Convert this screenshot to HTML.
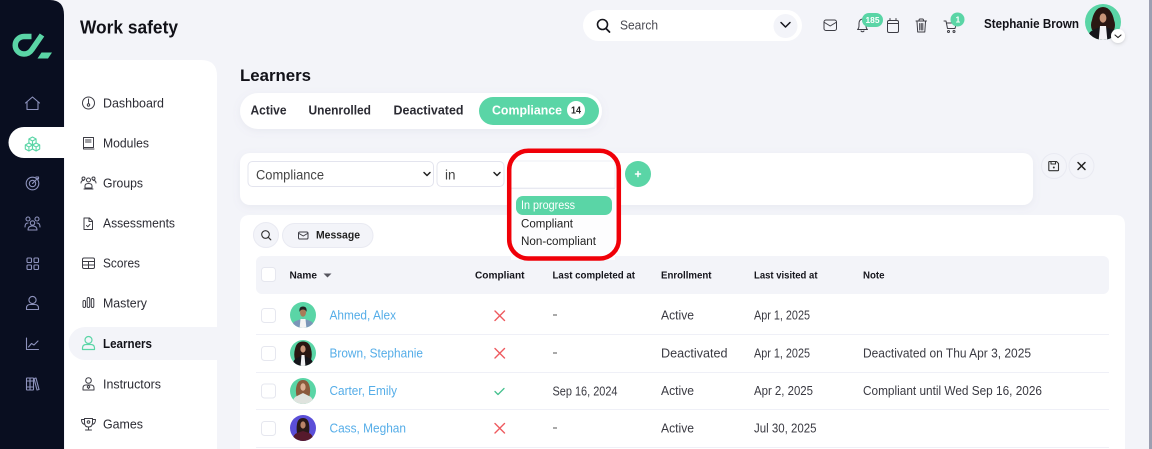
<!DOCTYPE html>
<html><head><meta charset="utf-8"><style>
html,body{margin:0;padding:0;width:1152px;height:449px;overflow:hidden;background:#f3f4f9}
svg{display:block}
text{font-family:"Liberation Sans",sans-serif;fill:#2b2b33}
.b{font-weight:700;fill:#111118}
.nav{font-size:13px}
.th{font-size:10px;font-weight:700;fill:#15151c}
.td{font-size:13px;fill:#3a3a42}
.ln{font-size:13px;fill:#55ade8}
.ic{fill:none;stroke:#3c3c44;stroke-width:1;stroke-linecap:round;stroke-linejoin:round}
.si{fill:none;stroke:#8e93bd;stroke-width:1.1;stroke-linecap:round;stroke-linejoin:round}
.g{fill:none;stroke:#5ad5a6;stroke-width:1.1;stroke-linecap:round;stroke-linejoin:round}
.cb{fill:#fff;stroke:#e6e7ef;stroke-width:1}
.sep{stroke:#eff0f7;stroke-width:1}
.xm{fill:none;stroke:#ee5a5f;stroke-width:1.4;stroke-linecap:round}
</style></head><body>
<svg width="1152" height="449" viewBox="0 0 1152 449" xmlns="http://www.w3.org/2000/svg">
<defs>
<filter id="s" x="-5%" y="-20%" width="110%" height="150%"><feDropShadow dx="0" dy="2" stdDeviation="4" flood-color="#8088a8" flood-opacity=".1"/></filter>
<filter id="s2" x="-50%" y="-50%" width="200%" height="200%"><feDropShadow dx="0" dy="1" stdDeviation="1.500" flood-color="#555" flood-opacity=".25"/></filter>
<clipPath id="c1"><circle cx="303" cy="315" r="13"/></clipPath>
<clipPath id="c2"><circle cx="303" cy="353" r="13"/></clipPath>
<clipPath id="c3"><circle cx="303" cy="391" r="13"/></clipPath>
<clipPath id="c4"><circle cx="303" cy="428" r="13"/></clipPath>
<clipPath id="c5"><circle cx="1103" cy="22" r="18"/></clipPath>
</defs>
<rect width="1152" height="449" fill="#f3f4f9"/>
<rect x="1149" y="0" width="3" height="449" fill="#9c9fb1"/>

<!-- sidebar -->
<path d="M0 0H50Q64 0 64 15V449H0Z" fill="#090e20"/>
<path d="M31.500 36.500H24A8.600 8.600 0 0 0 24 54Q29 54 32 49.500L42 35" fill="none" stroke="#5ad5a6" stroke-width="5.500"/>
<path d="M41.500 52.500H52L48 58.500H37.500Z" fill="#5ad5a6"/>
<path d="M25.500 103L32.500 97L39.500 103M27 102V109.500H38V102" class="si"/>
<path d="M24 127H65V158H24A15.500 15.500 0 0 1 24 127Z" fill="#fff"/>
<g class="g"><path d="M32.500 137l3.600 2v4l-3.600 2-3.600-2v-4zM28.900 139l3.600 2 3.600-2M32.500 141v4"/><path d="M28.900 143l3.600 2v4l-3.600 2-3.600-2v-4zM25.300 145l3.600 2 3.600-2M28.900 147v4"/><path d="M36.100 143l3.600 2v4l-3.600 2-3.600-2v-4zM32.500 145l3.600 2 3.600-2M36.100 147v4"/></g>
<g class="si"><circle cx="32.500" cy="183.500" r="6.300"/><circle cx="32.500" cy="183.500" r="3.200"/><path d="M32.500 183.500l5-5M36 177l2.500 0 0 2"/></g>
<g class="si"><circle cx="28" cy="219" r="2"/><circle cx="37" cy="219" r="2"/><circle cx="32.500" cy="223" r="2.200"/><path d="M25 227q0-4 3-4M40 227q0-4-3-4M28 230q0-4 4.500-4t4.500 4z"/></g>
<g class="si"><rect x="27" y="258" width="4.500" height="4.500" rx="1"/><rect x="34" y="258" width="4.500" height="4.500" rx="1"/><rect x="27" y="265" width="4.500" height="4.500" rx="1"/><rect x="34" y="265" width="4.500" height="4.500" rx="1"/></g>
<g class="si"><circle cx="32.500" cy="300" r="3.600"/><path d="M26.500 309.500v-1.500q0-3.500 4-3.500h4q4 0 4 3.500v1.500z"/></g>
<path d="M26.500 338v11.500H38.500M28.500 347l3-3.500 2.500 1.500 4-4" class="si"/>
<g class="si"><rect x="26.500" y="378" width="3.500" height="12" rx=".5"/><rect x="30" y="378" width="3.500" height="12" rx=".5"/><path d="M26.500 381h7M26.500 387h7M34 378.500l2-.5 3 11.500-2 .5z"/></g>

<!-- sub nav -->
<path d="M65 60H201Q217 60 217 76V449H65Z" fill="#fff"/>
<path d="M85 327H217V360H85A16.500 16.500 0 0 1 85 327Z" fill="#f3f4f9"/>
<text x="80" y="33.500" class="b" font-size="18" textLength="98" lengthAdjust="spacingAndGlyphs">Work safety</text>

<g class="ic"><circle cx="88.500" cy="103" r="6"/><path d="M88.500 99v4.500"/><circle cx="88.500" cy="105" r="1.200"/></g>
<g class="ic"><path d="M83.500 137.500h10v10h-10zM83.500 147.500v1.500h10.500M85.500 140h5.500M85.500 142h5.500"/></g>
<g class="ic"><circle cx="88.500" cy="180" r="2"/><circle cx="83.500" cy="178.500" r="1.500"/><circle cx="93.500" cy="178.500" r="1.500"/><path d="M85 188v-2q0-2.500 3.500-2.500t3.500 2.500v2zM81 183q0-2.500 2.500-2.500M96 183q0-2.500-2.500-2.500M84 189h9"/></g>
<g class="ic"><path d="M84 218h5.500l3 3v8.500H84zM89 218v3.500h3.500M86.500 225.500l1.300 1.300 2.200-2.500"/></g>
<g class="ic"><rect x="82.500" y="258" width="12" height="10.500" rx="1.500"/><path d="M82.500 261.500h12M82.500 265h12M88.500 261.500v7"/></g>
<g class="ic"><rect x="83" y="300.500" width="2.500" height="7" rx="1.200"/><rect x="87.200" y="297.500" width="2.500" height="10" rx="1.200"/><rect x="91.300" y="298.500" width="2.500" height="9" rx="1.200"/></g>
<g class="g" style="stroke-width:1.200"><circle cx="88.500" cy="340" r="3.500"/><path d="M82.500 349.500v-1.500q0-3.500 4-3.500h4q4 0 4 3.500v1.500z"/></g>
<g class="ic"><circle cx="88.500" cy="380.500" r="2.800"/><path d="M83 390v-2q0-3 3-3h5q3 0 3 3v2zM88.500 385l-1.300 2 1.300 1.500 1.300-1.500z"/></g>
<g class="ic"><path d="M84.500 418.500h8v4q0 4.500-4 4.500t-4-4.500zM84.500 419.500h-3q0 4.500 3.500 5M92.500 419.500h3q0 4.500-3.500 5M88.500 427v2.500M85.500 430h6"/><circle cx="88.500" cy="422" r="1.300"/></g>

<text x="103" y="107.500" class="nav" textLength="61" lengthAdjust="spacingAndGlyphs">Dashboard</text>
<text x="103" y="147.500" class="nav" textLength="46" lengthAdjust="spacingAndGlyphs">Modules</text>
<text x="103" y="187.500" class="nav" textLength="40" lengthAdjust="spacingAndGlyphs">Groups</text>
<text x="103" y="227.500" class="nav" textLength="72" lengthAdjust="spacingAndGlyphs">Assessments</text>
<text x="103" y="267.500" class="nav" textLength="37" lengthAdjust="spacingAndGlyphs">Scores</text>
<text x="103" y="307.500" class="nav" textLength="44" lengthAdjust="spacingAndGlyphs">Mastery</text>
<text x="103" y="348" class="nav b" textLength="49" lengthAdjust="spacingAndGlyphs">Learners</text>
<text x="103" y="388.500" class="nav" textLength="58" lengthAdjust="spacingAndGlyphs">Instructors</text>
<text x="103" y="428.500" class="nav" textLength="40" lengthAdjust="spacingAndGlyphs">Games</text>

<!-- top bar -->
<rect x="583" y="10" width="219" height="31" rx="15.500" fill="#fff"/>
<circle cx="602.500" cy="24.500" r="5" fill="none" stroke="#15151c" stroke-width="1.600"/>
<path d="M606 28.500l3.500 3.500" stroke="#15151c" stroke-width="1.800" stroke-linecap="round"/>
<text x="620" y="29.500" font-size="12.500" textLength="38" lengthAdjust="spacingAndGlyphs" style="fill:#4a4a52">Search</text>
<circle cx="785.500" cy="26" r="12" fill="#f3f4f9"/>
<path d="M781 22.500l4.500 4.500 4.500-4.500" fill="none" stroke="#15151c" stroke-width="1.500" stroke-linecap="round" stroke-linejoin="round"/>

<g class="ic"><rect x="824" y="20" width="12.500" height="10.500" rx="2"/><path d="M824.500 22.500l5.700 3.500 5.700-3.500"/></g>
<g class="ic"><path d="M857.500 29.500q1.500-1 1.500-4v-2q0-4 3.500-4.500t3.500 4.500v2q0 3 1.500 4zM861 31q1.500 1.500 3 0"/></g>
<rect x="862" y="13" width="21" height="14" rx="7" fill="#5ad5a6"/>
<text x="865.500" y="23" font-size="8.500" font-weight="700" textLength="14" lengthAdjust="spacingAndGlyphs" style="fill:#fff">185</text>
<g class="ic"><rect x="887.500" y="20.500" width="11" height="12" rx="1.500"/><path d="M887.500 23.500h11M890 18.500v2M896 18.500v2"/></g>
<g class="ic"><path d="M916 21h10.500M919 20.500q0-1.500 1-1.500h2.500q1 0 1 1.500M917 21.500l.7 10.500h7.100l.7-10.500M919.700 23.500v6.500M921.250 23.500v6.500M922.800 23.500v6.500"/></g>
<g class="ic"><path d="M944 21h2l1.500 7.500h7.500l1.500-5.500h-10"/><circle cx="948.500" cy="31.500" r="1"/><circle cx="954" cy="31.500" r="1"/></g>
<circle cx="957.500" cy="19.500" r="7" fill="#5ad5a6"/>
<text x="955.500" y="22.500" font-size="8.500" font-weight="700" style="fill:#fff">1</text>
<text x="984" y="28" class="b" font-size="12.500" textLength="95" lengthAdjust="spacingAndGlyphs">Stephanie Brown</text>

<!-- main avatar -->
<circle cx="1103" cy="22" r="18" fill="#5ad5a6"/>
<g clip-path="url(#c5)">
<path d="M1092 30q-2-5 0-10 1-5 3-8 3-5 8-5t8 5q2 3 3 8 2 5 0 10z" fill="#2a1712"/>
<ellipse cx="1103" cy="18" rx="3.400" ry="4.600" fill="#c99578"/>
<path d="M1086 42q1-10 9-13l8-3 8 3q8 3 9 13z" fill="#15151a"/>
<path d="M1100 26h6l1.500 16h-9z" fill="#f3f3f5"/>
</g>
<circle cx="1118" cy="36" r="7" fill="#fff" filter="url(#s2)"/>
<path d="M1115 35l3 2.500 3-2.500" fill="none" stroke="#222" stroke-width="1.100" stroke-linecap="round"/>

<!-- heading + tabs -->
<text x="240" y="81" class="b" font-size="17" textLength="71" lengthAdjust="spacingAndGlyphs">Learners</text>
<rect x="240" y="93" width="362" height="36" rx="18" fill="#fff" filter="url(#s)"/>
<text x="250.500" y="114.500" font-size="13" font-weight="700" textLength="36" lengthAdjust="spacingAndGlyphs" style="fill:#2b2b33">Active</text>
<text x="308.500" y="114.500" font-size="13" font-weight="700" textLength="62.500" lengthAdjust="spacingAndGlyphs" style="fill:#2b2b33">Unenrolled</text>
<text x="393.500" y="114.500" font-size="13" font-weight="700" textLength="70" lengthAdjust="spacingAndGlyphs" style="fill:#2b2b33">Deactivated</text>
<rect x="479" y="97" width="120" height="28" rx="14" fill="#5ad5a6"/>
<text x="492" y="114.500" font-size="13" font-weight="700" textLength="70" lengthAdjust="spacingAndGlyphs" style="fill:#fff">Compliance</text>
<circle cx="576" cy="110" r="9" fill="#fff"/>
<text x="571" y="113.500" font-size="10" font-weight="700" textLength="10" lengthAdjust="spacingAndGlyphs" style="fill:#222">14</text>

<!-- filter card -->
<rect x="240" y="153" width="793" height="52" rx="10" fill="#fff" filter="url(#s)"/>
<rect x="248" y="161.500" width="185.500" height="25" rx="4.500" fill="#fff" stroke="#e3e4ee"/>
<text x="256" y="179.500" font-size="13.500" textLength="68" lengthAdjust="spacingAndGlyphs" style="fill:#444">Compliance</text>
<path d="M424 172.500l3 3 3-3" fill="none" stroke="#222" stroke-width="1.500" stroke-linecap="round" stroke-linejoin="round"/>
<rect x="437" y="161.500" width="67" height="25" rx="4.500" fill="#fff" stroke="#e3e4ee"/>
<text x="445" y="179.500" font-size="13.500" textLength="10.500" lengthAdjust="spacingAndGlyphs" style="fill:#444">in</text>
<path d="M494 172.500l3 3 3-3" fill="none" stroke="#222" stroke-width="1.500" stroke-linecap="round" stroke-linejoin="round"/>
<circle cx="638" cy="174" r="13" fill="#5ad5a6"/>
<path d="M635.500 174h5M638 171.500v5" stroke="#fff" stroke-width="1.500" stroke-linecap="round"/>
<circle cx="1054" cy="166" r="12.500" fill="#f3f4f9" stroke="#e9eaf2"/>
<circle cx="1081.500" cy="166" r="12.500" fill="#f3f4f9" stroke="#e9eaf2"/>
<path d="M1049.500 161.500h7l2 2v6.500q0 .7-.7.7h-8.300q-.7 0-.7-.7v-7.800q0-.7.700-.7zM1051 161.500v2.500h4.500v-2.500" fill="none" stroke="#333" stroke-width="1.100" stroke-linejoin="round"/>
<circle cx="1053.800" cy="167.500" r="1" fill="#333"/>
<path d="M1078 162.500l7 7M1085 162.500l-7 7" stroke="#222" stroke-width="1.500" stroke-linecap="round"/>

<!-- table card -->
<path d="M250 215H1115Q1125 215 1125 225V449H240V225Q240 215 250 215Z" fill="#fff"/>
<circle cx="266" cy="235" r="12.500" fill="#f3f4f9" stroke="#e9eaf2"/>
<circle cx="265.500" cy="234.500" r="3.800" fill="none" stroke="#333" stroke-width="1.100"/>
<path d="M268.300 237.300l2.500 2.500" stroke="#333" stroke-width="1.100" stroke-linecap="round"/>
<rect x="282.500" y="223.500" width="90.500" height="24" rx="12" fill="#f3f4f9" stroke="#e9eaf2"/>
<g class="ic"><rect x="298.500" y="232" width="9.500" height="7" rx="1.300"/><path d="M299 233.500l4.250 2.500 4.250-2.500"/></g>
<text x="316" y="238.500" font-size="11" font-weight="700" textLength="44" lengthAdjust="spacingAndGlyphs" style="fill:#222">Message</text>

<rect x="256" y="256" width="853" height="38" rx="6" fill="#f3f4f9"/>
<rect x="261.500" y="267.500" width="14" height="14" rx="3" class="cb"/>
<text x="289.500" y="278.500" class="th" textLength="27.500" lengthAdjust="spacingAndGlyphs">Name</text>
<path d="M323.500 273.500h8l-4 4z" fill="#55555e"/>
<text x="475" y="278.500" class="th" textLength="49.500" lengthAdjust="spacingAndGlyphs">Compliant</text>
<text x="552.500" y="278.500" class="th" textLength="82.500" lengthAdjust="spacingAndGlyphs">Last completed at</text>
<text x="661" y="278.500" class="th" textLength="50.500" lengthAdjust="spacingAndGlyphs">Enrollment</text>
<text x="754" y="278.500" class="th" textLength="63.500" lengthAdjust="spacingAndGlyphs">Last visited at</text>
<text x="863" y="278.500" class="th" textLength="21.500" lengthAdjust="spacingAndGlyphs">Note</text>

<path d="M256 334.500H1109M256 372.500H1109M256 409.500H1109M256 447.500H1109" class="sep"/>

<!-- rows -->
<rect x="261.500" y="308.500" width="14" height="14" rx="3" class="cb"/>
<rect x="261.500" y="346.500" width="14" height="14" rx="3" class="cb"/>
<rect x="261.500" y="384" width="14" height="14" rx="3" class="cb"/>
<rect x="261.500" y="421.500" width="14" height="14" rx="3" class="cb"/>

<circle cx="303" cy="315" r="13" fill="#5ad5a6"/>
<g clip-path="url(#c1)"><path d="M291 330q0-8 6-9.500l6-2 6 2q6 1.500 6 9.500z" fill="#7b96b8"/><path d="M300.500 319h5l1 10h-7z" fill="#f4f4f4"/><ellipse cx="303" cy="312.500" rx="3" ry="4.200" fill="#a97a58"/><path d="M299.500 312q-.8-5.500 3.500-5.500t3.500 5.500q-1-2.500-3.500-2.500t-3.500 2.500z" fill="#222"/></g>
<circle cx="303" cy="353" r="13" fill="#5ad5a6"/>
<g clip-path="url(#c2)"><path d="M295 360q-1.500-6 0-11 1.500-7.500 8-7.500t8 7.500q1.500 5 0 11z" fill="#2a1712"/><ellipse cx="303" cy="349" rx="2.600" ry="3.600" fill="#c99578"/><path d="M292 368q1-9 5-10l6-3 6 3q4 1 5 10z" fill="#15151a"/><path d="M301.500 355h3l1 12h-5z" fill="#f3f3f5"/></g>
<circle cx="303" cy="391" r="13" fill="#5ad5a6"/>
<g clip-path="url(#c3)"><path d="M297 398q-2-7-.5-12 1.500-6 6.500-6t6.500 6q1.500 5-.5 12z" fill="#8a5a3c"/><ellipse cx="303" cy="387" rx="2.600" ry="3.800" fill="#dcae92"/><path d="M292 405q1-8 5-9l6-3 6 3q4 1 5 9z" fill="#dfe3de"/></g>
<circle cx="303" cy="428" r="13" fill="#5b4fd8"/>
<g clip-path="url(#c4)"><path d="M297.500 436q-1.500-7-.5-12 1-6 6-6t6 6q1 5-.5 12z" fill="#2a1a18"/><ellipse cx="303" cy="425" rx="2.600" ry="3.600" fill="#b98468"/><path d="M292 443q1-9 5-10l6-2 6 2q4 1 5 10z" fill="#561a2c"/></g>

<text x="329.500" y="319.500" class="ln" textLength="66.500" lengthAdjust="spacingAndGlyphs">Ahmed, Alex</text>
<text x="329.500" y="357.500" class="ln" textLength="93.500" lengthAdjust="spacingAndGlyphs">Brown, Stephanie</text>
<text x="329.500" y="395" class="ln" textLength="67.500" lengthAdjust="spacingAndGlyphs">Carter, Emily</text>
<text x="329.500" y="432.500" class="ln" textLength="76.500" lengthAdjust="spacingAndGlyphs">Cass, Meghan</text>

<path d="M495 311l9.500 9.500M504.500 311l-9.500 9.500M495 348.500l9.500 9.500M504.500 348.500l-9.500 9.500M495 423.500l9.500 9.500M504.500 423.500l-9.500 9.500" class="xm"/>
<path d="M495 391.500l3 3 6-6" fill="none" stroke="#45c08e" stroke-width="1.300" stroke-linecap="round" stroke-linejoin="round"/>

<path d="M553 315h4M553 353h4M553 428h4" stroke="#555" stroke-width="1.100"/>
<text x="552.500" y="395.500" class="td" textLength="65" lengthAdjust="spacingAndGlyphs">Sep 16, 2024</text>

<text x="661" y="319.500" class="td" textLength="33" lengthAdjust="spacingAndGlyphs">Active</text>
<text x="661" y="357.500" class="td" textLength="66.500" lengthAdjust="spacingAndGlyphs">Deactivated</text>
<text x="661" y="395" class="td" textLength="33" lengthAdjust="spacingAndGlyphs">Active</text>
<text x="661" y="432.500" class="td" textLength="33" lengthAdjust="spacingAndGlyphs">Active</text>

<text x="754" y="319.500" class="td" textLength="56" lengthAdjust="spacingAndGlyphs">Apr 1, 2025</text>
<text x="754" y="357.500" class="td" textLength="56" lengthAdjust="spacingAndGlyphs">Apr 1, 2025</text>
<text x="754" y="395" class="td" textLength="59" lengthAdjust="spacingAndGlyphs">Apr 2, 2025</text>
<text x="754" y="432.500" class="td" textLength="62.500" lengthAdjust="spacingAndGlyphs">Jul 30, 2025</text>

<text x="863" y="357.500" class="td" textLength="168" lengthAdjust="spacingAndGlyphs">Deactivated on Thu Apr 3, 2025</text>
<text x="863" y="395" class="td" textLength="179" lengthAdjust="spacingAndGlyphs">Compliant until Wed Sep 16, 2026</text>

<!-- dropdown -->
<rect x="509" y="151" width="110" height="108" rx="18" fill="#fff"/>
<rect x="511" y="161" width="104" height="27" fill="#fff" stroke="#eeeff5"/>
<rect x="511" y="188" width="104" height="72" fill="#fdfdfe"/>
<path d="M511 188.500H615" stroke="#e8e9f1"/>
<rect x="516" y="196" width="96" height="19" rx="7" fill="#5ad5a6"/>
<text x="521" y="209" font-size="11.500" textLength="54" lengthAdjust="spacingAndGlyphs" style="fill:#fff">In progress</text>
<text x="521" y="227.500" font-size="11.500" textLength="52" lengthAdjust="spacingAndGlyphs" style="fill:#222">Compliant</text>
<text x="521" y="245" font-size="11.500" textLength="75" lengthAdjust="spacingAndGlyphs" style="fill:#222">Non-compliant</text>
<rect x="509.200" y="150.700" width="109.600" height="107.800" rx="19" fill="none" stroke="#f00008" stroke-width="4.500"/>
</svg>
</body></html>
